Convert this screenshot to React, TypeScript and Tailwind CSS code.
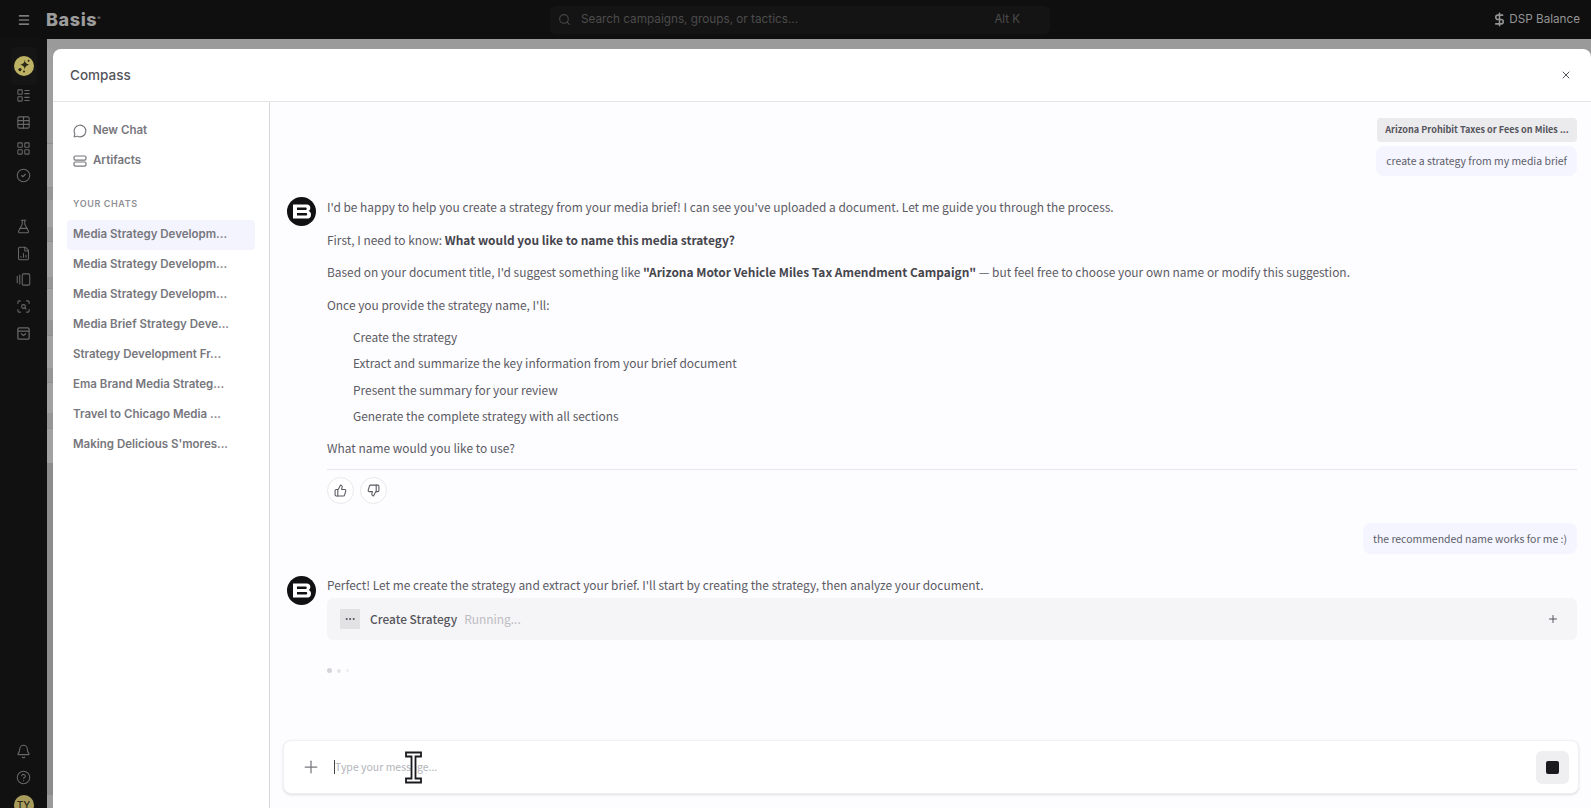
import { FC, ReactNode } from 'react';
import {
  Bell,
  CircleCheck,
  CircleHelp,
  DollarSign,
  Ellipsis,
  FileChartColumn,
  FlaskConical,
  GalleryHorizontalEnd,
  LayoutGrid,
  LayoutList,
  Menu,
  MessageCircle,
  Plus,
  ScanSearch,
  Search,
  Table,
  ThumbsDown,
  ThumbsUp,
  X,
} from 'lucide-react';

const chats = [
  'Media Strategy Developm...',
  'Media Strategy Developm...',
  'Media Strategy Developm...',
  'Media Brief Strategy Deve...',
  'Strategy Development Fr...',
  'Ema Brand Media Strateg...',
  'Travel to Chicago Media ...',
  "Making Delicious S'mores...",
];

const railTop = [LayoutList, Table, LayoutGrid, CircleCheck];
const railMiddle = [FlaskConical, FileChartColumn, GalleryHorizontalEnd, ScanSearch];

// rows of the dimmed table that peek out left of the dialog
const backdropRows = [
  'h-[94px] bg-[#9e9e9e]',
  'h-[44px] bg-[#a2a2a2] border-t border-[#8e8e8e]',
  'h-[13px] bg-[#969696] border-t border-[#8e8e8e]',
  'h-[27px] bg-[#a2a2a2]',
  'h-[14px] bg-[#969696]',
  'h-[36px] bg-[#a2a2a2] border-t border-[#8e8e8e]',
  'h-[11px] bg-[#969696]',
  'h-[32px] bg-[#a2a2a2] border-t border-[#8e8e8e]',
  'h-[15px] bg-[#969696]',
  'h-[33px] bg-[#a2a2a2] border-t border-[#8e8e8e]',
  'h-[14px] bg-[#969696]',
  'h-[31px] bg-[#a2a2a2] border-t border-[#8e8e8e]',
  'h-[15px] bg-[#969696]',
  'h-[35px] bg-[#a2a2a2] border-t border-[#8e8e8e]',
  'h-[332px] bg-[#8c8c8c]',
  'h-[13px] bg-[#9a9a9a]',
];

const BotAvatar: FC = () => (
  <div className="w-[29px] h-[29px] shrink-0 rounded-full bg-[#111113] flex items-center justify-center">
    <svg width="18" height="15" viewBox="0 0 19 15" fill="none">
      <path
        fillRule="evenodd"
        d="M0 0H14.5C17 0 18.3 1.4 18.3 3.6C18.3 5.2 17.6 6.4 16.4 7C18 7.6 19 8.9 19 10.8C19 13.4 17.3 15 14.6 15H0V0ZM4.2 3.2V5.8H13.2C14 5.8 14.5 5.3 14.5 4.5C14.5 3.7 14 3.2 13.2 3.2H4.2ZM4.2 9V11.8H13.6C14.5 11.8 15 11.3 15 10.4C15 9.5 14.5 9 13.6 9H4.2Z"
        fill="#ffffff"
      />
    </svg>
  </div>
);

const Para: FC<{ children: ReactNode }> = ({ children }) => (
  <p className="leading-[20px] mb-[12.6px]">{children}</p>
);

const App: FC = () => {
  return (
    <div className="w-[1591px] h-[808px] overflow-hidden flex flex-col bg-[#111111] font-['Inter',sans-serif]">
      {/* Top bar */}
      <header className="h-[39px] shrink-0 flex items-center bg-[#0f0f0f]">
        <div className="w-[47px] flex items-center justify-center">
          <Menu className="w-[14px] h-[14px] text-[#a3a3a3]" />
        </div>
        <span className="text-[18px] font-extrabold leading-none tracking-[0.6px] text-[#9c9c9c] w-[503px] -ml-px">
          Basis<span className="relative -top-[6px] text-[5px] font-normal">®</span>
        </span>
        <div className="w-[500px] h-[28px] ml-px flex items-center rounded-md bg-[#141414] pl-[8px] pr-[30px]">
          <Search className="w-[13px] h-[13px] text-[#474747]" />
          <span className="ml-[10px] text-[11.75px] text-[#4c4c4c]">Search campaigns, groups, or tactics...</span>
          <span className="ml-auto text-[11.5px] text-[#4c4c4c]">Alt K</span>
        </div>
        <div className="ml-auto flex items-center pr-[11px] text-[11.7px] text-[#949494]">
          <DollarSign className="w-[15px] h-[15px] mr-[2px]" strokeWidth={2.5} />
          DSP Balance
        </div>
      </header>

      <div className="flex-1 min-h-0 flex">
        {/* Left rail */}
        <nav className="w-[47px] shrink-0 flex flex-col items-center bg-[#111111]">
          <div className="mt-[8px] w-[26px] h-[38px] rounded bg-[#151515] flex items-center justify-center">
            <svg width="20" height="20" viewBox="0 0 20 20">
              <circle cx="10" cy="10" r="10" fill="#bdb163" />
              <path d="M10.8 3.6C11.2 7 12 8 15.6 8.8C12 9.6 11.2 10.6 10.8 14C10.4 10.6 9.6 9.6 6 8.8C9.6 8 10.4 7 10.8 3.6Z" fill="#2a2716" />
              <circle cx="6" cy="13.6" r="1.6" fill="#2a2716" />
              <circle cx="14.6" cy="4.8" r="1" fill="#2a2716" />
              <circle cx="10" cy="15.6" r="1" fill="#2a2716" />
            </svg>
          </div>
          <div className="mt-[3px] flex flex-col items-center gap-[11.7px]">
            {railTop.map((Icon, i) => (
              <Icon key={i} className="w-[15px] h-[15px] text-[#686868]" strokeWidth={1.7} />
            ))}
          </div>
          <div className="mt-[36px] flex flex-col items-center gap-[11.7px]">
            {railMiddle.map((Icon, i) => (
              <Icon key={i} className="w-[15px] h-[15px] text-[#686868]" strokeWidth={1.7} />
            ))}
            <svg className="w-[15px] h-[15px] text-[#686868]" viewBox="0 0 24 24" fill="none" stroke="currentColor" strokeWidth="2">
              <rect x="3" y="3" width="18" height="18" rx="2" />
              <path d="M3 8H21M8 12L12 15L16 12" />
            </svg>
          </div>
          <div className="mt-auto flex flex-col items-center">
            <Bell className="w-[15px] h-[15px] text-[#686868]" strokeWidth={1.7} />
            <CircleHelp className="w-[15px] h-[15px] mt-[11px] text-[#686868]" strokeWidth={1.7} />
            <div className="w-[20px] h-[20px] mt-[10px] -mb-[7px] rounded-full bg-[#a89c5c] flex items-center justify-center text-[10px] font-medium text-[#2a2716]">
              TY
            </div>
          </div>
        </nav>

        {/* Dimmed page behind the dialog */}
        <div className="flex-1 min-w-0 flex flex-col bg-[#9a9a9a] pt-[10px]">
          <div className="flex-1 min-h-0 flex">
            <div className="w-[6px] shrink-0 flex flex-col">
              {backdropRows.map((row, i) => (
                <div key={i} className={row} />
              ))}
            </div>
            <div className="flex-1 min-w-0 bg-white rounded-t-lg flex flex-col">
              <div className="h-[53px] shrink-0 flex items-center justify-between border-b border-[#e5e5e8] pl-[17px] pr-[19px]">
                <span className="text-[13.5px] font-medium text-[#55555c]">Compass</span>
                <X className="w-[12px] h-[12px] text-[#55555c]" />
              </div>

              <div className="flex-1 min-h-0 flex">
                {/* Chat list */}
                <aside className="w-[217px] shrink-0 border-r border-[#d9d9dc] px-[14px] pt-[14px]">
                  <div className="flex items-center h-[30px] pl-[6px] text-[11.5px] font-semibold text-[#77777d]">
                    <MessageCircle className="w-[14px] h-[14px] mr-[6px]" />
                    New Chat
                  </div>
                  <div className="flex items-center h-[30px] pl-[6px] text-[11.5px] font-semibold text-[#77777d]">
                    <svg className="w-[14px] h-[14px] mr-[6px]" viewBox="0 0 14 14" fill="none" stroke="currentColor" strokeWidth="1.2">
                      <rect x="1" y="2" width="12" height="4.2" rx="1.4" />
                      <rect x="1" y="8" width="12" height="4.2" rx="1.4" />
                    </svg>
                    Artifacts
                  </div>
                  <div className="mt-[20px] mb-[8px] pl-[6px] text-[9px] leading-[16px] font-semibold tracking-[0.6px] text-[#909096]">
                    YOUR CHATS
                  </div>
                  {chats.map((chat, i) => (
                    <div
                      key={i}
                      className={`h-[30px] flex items-center pl-[6px] rounded text-[11.5px] font-semibold text-[#77777d] whitespace-nowrap ${
                        i === 0 ? 'bg-[#f3f4fe]' : ''
                      }`}
                    >
                      {chat}
                    </div>
                  ))}
                </aside>

                {/* Conversation */}
                <main className="flex-1 min-w-0 flex flex-col bg-[#fdfcff] text-[11.93px] text-[#5b5b63] font-['Noto_Sans_CJK_SC',sans-serif]">
                  <div className="flex-1 min-h-0 pl-[17px] pr-[14px] pt-[16px]">
                    <div className="flex flex-col items-end gap-[4px]">
                      <div className="w-[200px] h-[24px] flex items-center justify-center rounded bg-[#ebeaed] text-[9.1px] font-bold text-[#55555c] whitespace-nowrap">
                        Arizona Prohibit Taxes or Fees on Miles ...
                      </div>
                      <div className="h-[30px] flex items-center rounded-lg bg-[#f4f5fe] px-[10px] text-[10.45px] text-[#5e5e6a]">
                        create a strategy from my media brief
                      </div>
                    </div>

                    <div className="flex gap-[11px] mt-[21px]">
                      <BotAvatar />
                      <div className="flex-1 min-w-0">
                        <Para>
                          I'd be happy to help you create a strategy from your media brief! I can see you've uploaded a document. Let me guide you through the process.
                        </Para>
                        <Para>
                          First, I need to know: <b className="font-bold text-[#45454c]">What would you like to name this media strategy?</b>
                        </Para>
                        <Para>
                          Based on your document title, I'd suggest something like{' '}
                          <b className="font-bold text-[#45454c]">"Arizona Motor Vehicle Miles Tax Amendment Campaign"</b> — but feel free to choose your own name or modify this suggestion.
                        </Para>
                        <p className="leading-[20px]">Once you provide the strategy name, I'll:</p>
                        <ul className="pl-[26px] mt-[9px] mb-[9px]">
                          <li className="h-[26.4px] flex items-center">Create the strategy</li>
                          <li className="h-[26.4px] flex items-center">Extract and summarize the key information from your brief document</li>
                          <li className="h-[26.4px] flex items-center">Present the summary for your review</li>
                          <li className="h-[26.4px] flex items-center">Generate the complete strategy with all sections</li>
                        </ul>
                        <p className="leading-[20px]">What name would you like to use?</p>
                        <div className="mt-[11px] pt-[7px] border-t border-[#e8e8ec] flex gap-[6px]">
                          <div className="w-[27px] h-[27px] rounded-full bg-white border border-[#e8e8ec] flex items-center justify-center">
                            <ThumbsUp className="w-[13px] h-[13px]" />
                          </div>
                          <div className="w-[27px] h-[27px] rounded-full bg-white border border-[#e8e8ec] flex items-center justify-center">
                            <ThumbsDown className="w-[13px] h-[13px]" />
                          </div>
                        </div>
                      </div>
                    </div>

                    <div className="flex justify-end mt-[19px]">
                      <div className="h-[31px] flex items-center rounded-lg bg-[#f4f5fe] px-[10px] text-[10.45px] text-[#5e5e6a]">
                        the recommended name works for me :)
                      </div>
                    </div>

                    <div className="flex gap-[11px] mt-[22px]">
                      <BotAvatar />
                      <div className="flex-1 min-w-0">
                        <p className="leading-[20px] -mt-[1px]">
                          Perfect! Let me create the strategy and extract your brief. I'll start by creating the strategy, then analyze your document.
                        </p>
                        <div className="mt-[3px] h-[42px] rounded-md bg-[#f5f4f7] flex items-center pl-[13px] pr-[18px]">
                          <div className="w-[20px] h-[20px] bg-[#e2e1e4] flex items-center justify-center">
                            <Ellipsis className="w-[12px] h-[12px] text-[#45454c]" />
                          </div>
                          <span className="ml-[10px] font-medium text-[#55555c]">Create Strategy</span>
                          <span className="ml-[7px] text-[#bdbdc2]">Running...</span>
                          <Plus className="ml-auto w-[12px] h-[12px] text-[#55555c]" />
                        </div>
                        <div className="mt-[28px] flex items-center gap-[5px]">
                          <span className="w-[5px] h-[5px] rounded-full bg-[#d5d5d9]" />
                          <span className="w-[4px] h-[4px] rounded-full bg-[#e4e4e7]" />
                          <span className="w-[3px] h-[3px] rounded-full bg-[#eeeef0]" />
                        </div>
                      </div>
                    </div>
                  </div>

                  {/* Composer */}
                  <div className="relative shrink-0 h-[54px] ml-[13px] mr-[12px] mb-[14px] rounded-lg bg-white border border-[#f0eff3] shadow-sm flex items-center pl-[17px] pr-[9px]">
                    <Plus className="w-[20px] h-[20px] text-[#77777d]" strokeWidth={1.5} />
                    <div className="ml-[13px] w-[1px] h-[14px] bg-[#45454c]" />
                    <span className="text-[10.5px] text-[#b5b5ba]">Type your message...</span>
                    <div className="ml-auto w-[33px] h-[33px] rounded-md bg-[#efeef1] flex items-center justify-center">
                      <div className="w-[13px] h-[13px] rounded-[2px] bg-[#1b1b1f]" />
                    </div>
                    {/* Mouse pointer */}
                    <svg className="absolute left-[121px] top-[10px]" width="17" height="33" viewBox="0 0 17 33" fill="none">
                      <path d="M1 1.5H16V5.5H10.5V27.5H16V31.5H1V27.5H6.5V5.5H1V1.5Z" fill="#ffffff" stroke="#1b1b1f" strokeWidth="1.8" />
                    </svg>
                  </div>
                </main>
              </div>
            </div>
          </div>
        </div>
      </div>
    </div>
  );
};

export default App;
